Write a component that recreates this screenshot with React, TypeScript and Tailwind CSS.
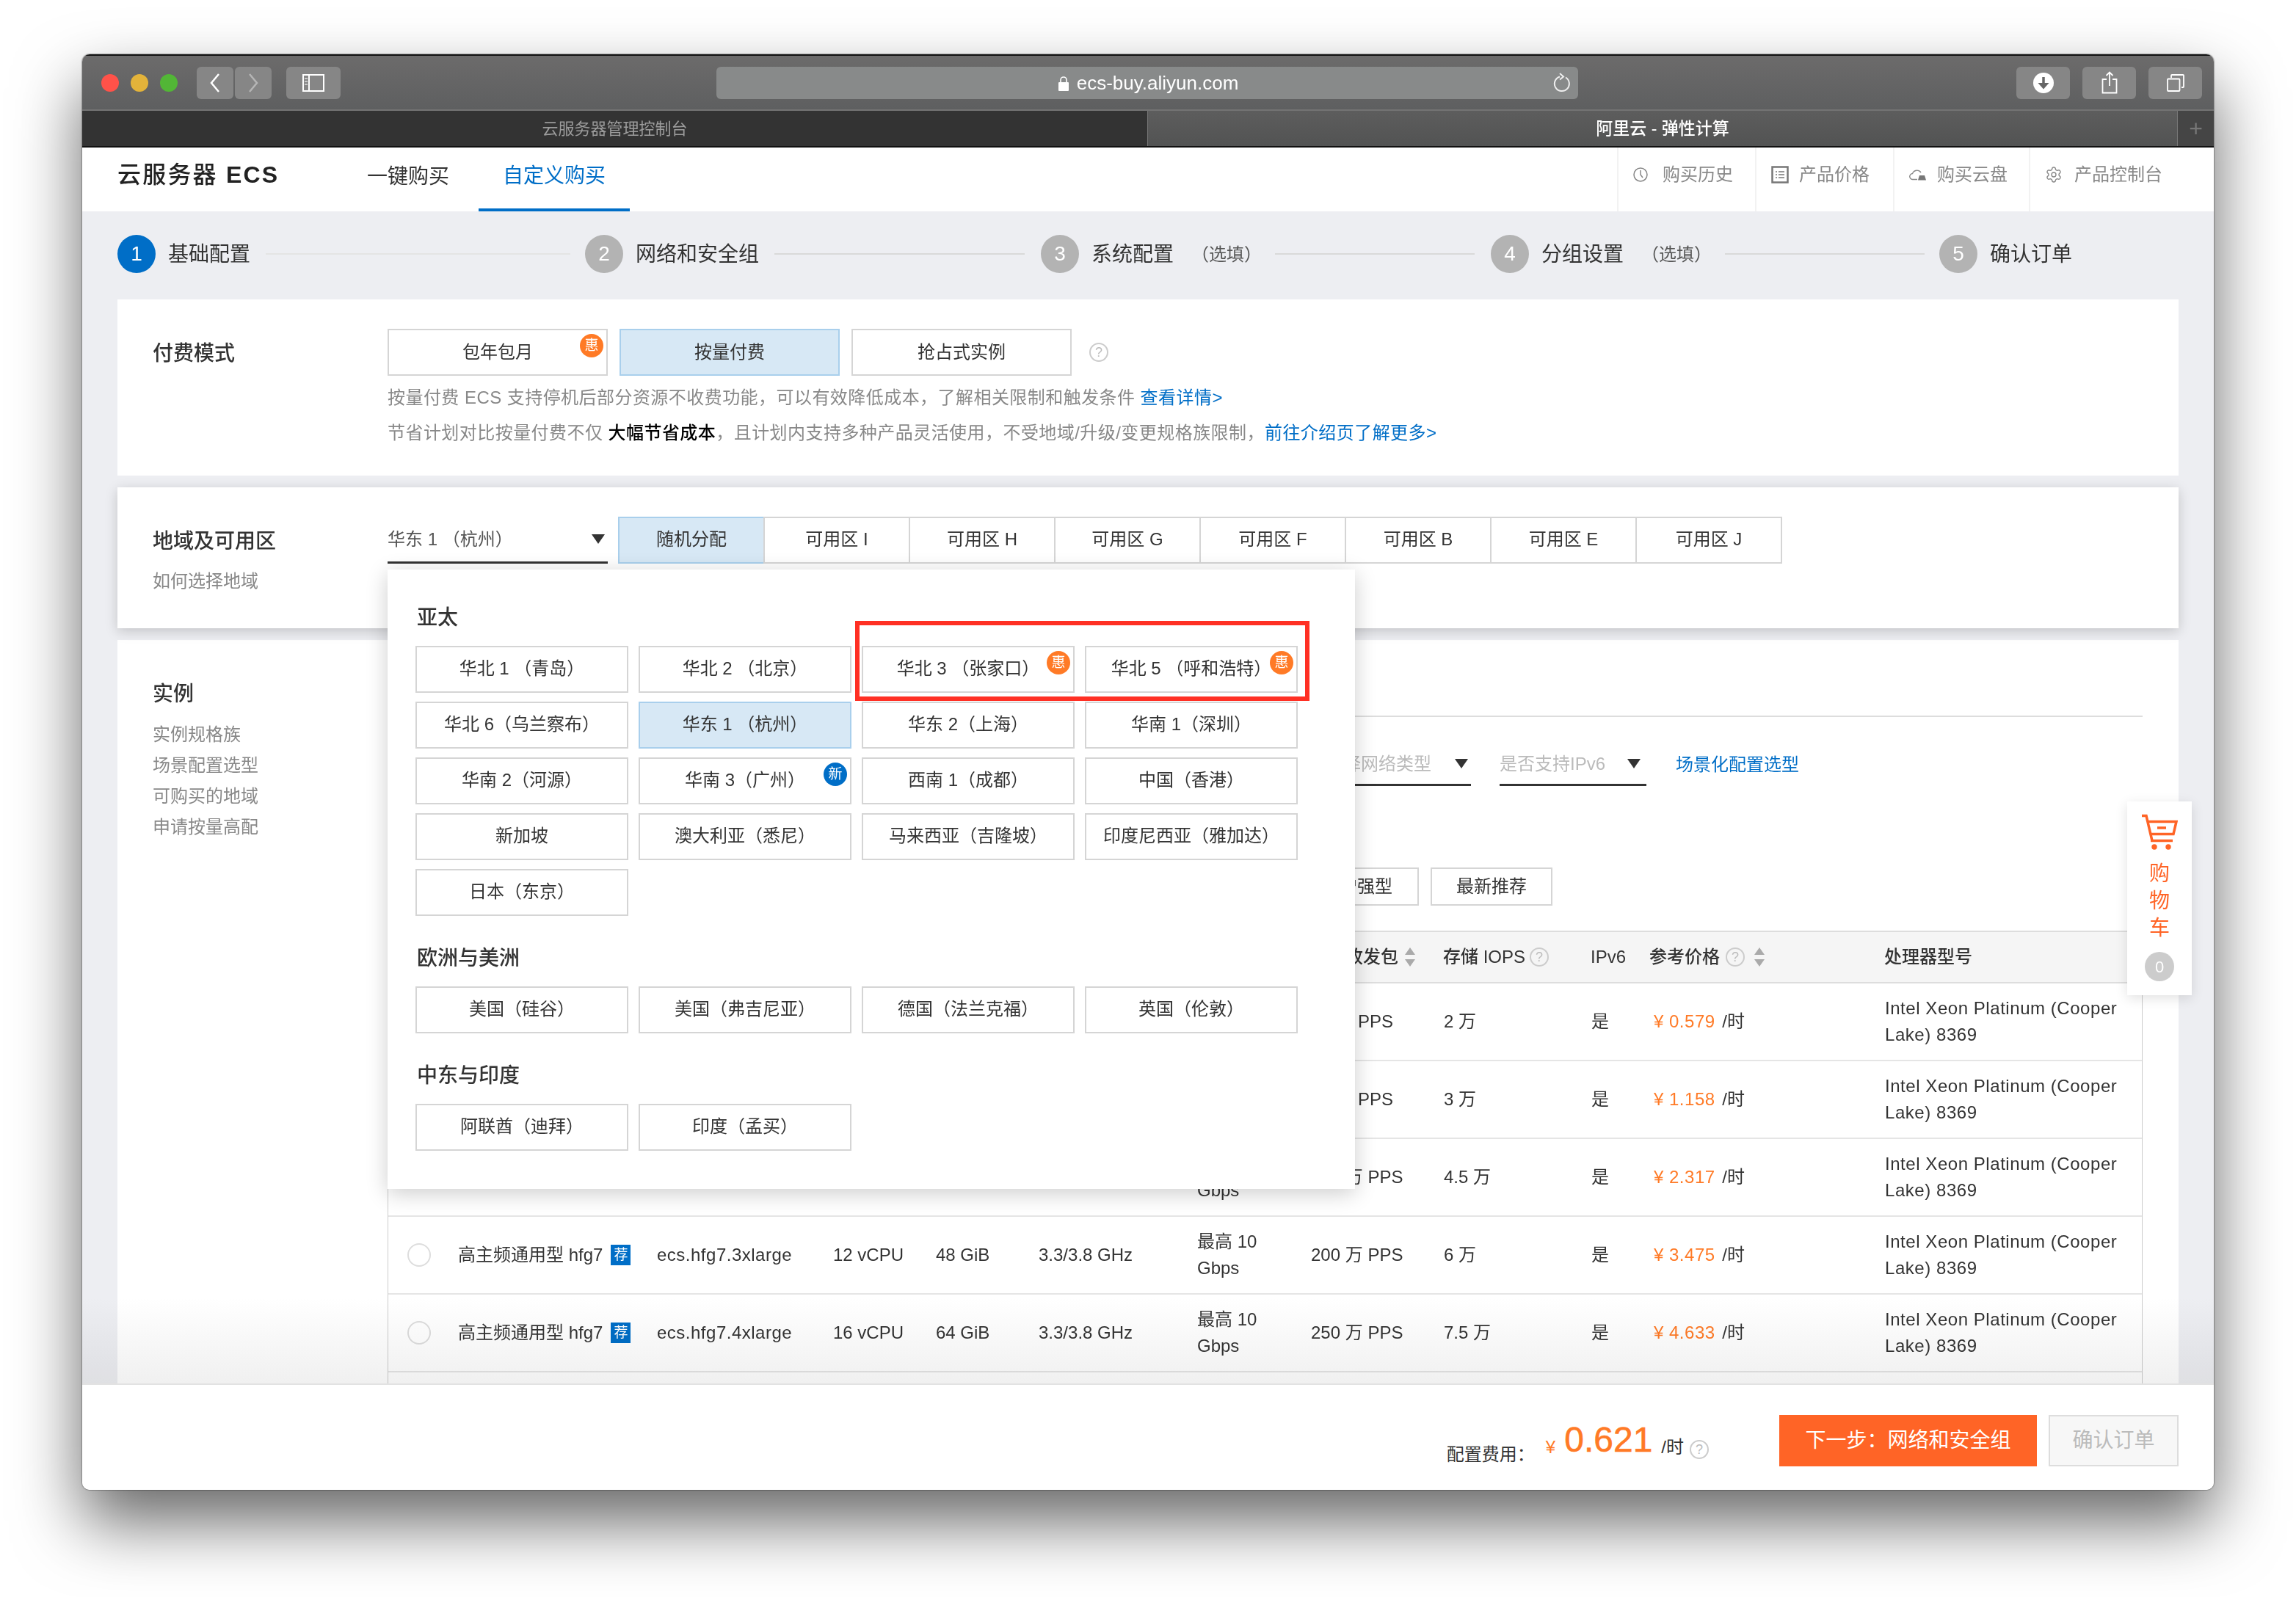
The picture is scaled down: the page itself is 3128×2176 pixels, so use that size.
import type { ReactNode } from 'react';
import { Settings } from 'lucide-react';

// the page uses full-width punctuation in its Chinese copy
const zh = (s: string) =>
  s.replace(/\(/g, '\uFF08').replace(/\)/g, '\uFF09').replace(/,/g, '\uFF0C').replace(/:/g, '\uFF1A');

const ROWS = [
  { spec: 'ecs.hfg7.large', cpu: '2 vCPU', mem: '8 GiB', pps: '30 万 PPS', iops: '2 万', price: '0.579' },
  { spec: 'ecs.hfg7.xlarge', cpu: '4 vCPU', mem: '16 GiB', pps: '50 万 PPS', iops: '3 万', price: '1.158' },
  { spec: 'ecs.hfg7.2xlarge', cpu: '8 vCPU', mem: '32 GiB', pps: '100 万 PPS', iops: '4.5 万', price: '2.317' },
  { spec: 'ecs.hfg7.3xlarge', cpu: '12 vCPU', mem: '48 GiB', pps: '200 万 PPS', iops: '6 万', price: '3.475' },
  { spec: 'ecs.hfg7.4xlarge', cpu: '16 vCPU', mem: '64 GiB', pps: '250 万 PPS', iops: '7.5 万', price: '4.633' },
];

const ZONES = ['可用区 I', '可用区 H', '可用区 G', '可用区 F', '可用区 B', '可用区 E', '可用区 J'];

const COLS =
  'grid grid-cols-[95px_271px_240px_140px_140px_216px_155px_181px_201px_80px_320px_351px] items-center';

type Region = { name: string; active?: boolean; badge?: '惠' | '新' };

const ASIA: Region[] = [
  { name: '华北 1 (青岛)' },
  { name: '华北 2 (北京)' },
  { name: '华北 3 (张家口)', badge: '惠' },
  { name: '华北 5 (呼和浩特)', badge: '惠' },
  { name: '华北 6(乌兰察布)' },
  { name: '华东 1 (杭州)', active: true },
  { name: '华东 2(上海)' },
  { name: '华南 1(深圳)' },
  { name: '华南 2(河源)' },
  { name: '华南 3(广州)', badge: '新' },
  { name: '西南 1(成都)' },
  { name: '中国(香港)' },
  { name: '新加坡' },
  { name: '澳大利亚(悉尼)' },
  { name: '马来西亚(吉隆坡)' },
  { name: '印度尼西亚(雅加达)' },
  { name: '日本(东京)' },
];

function Triangle({ className = '' }: { className?: string }) {
  return (
    <svg width="18" height="13" viewBox="0 0 18 13" className={className}>
      <polygon points="0,0 18,0 9,13" fill="#333" />
    </svg>
  );
}

function Help({ className = '' }: { className?: string }) {
  return (
    <span
      className={
        'inline-flex h-[26px] w-[26px] items-center justify-center rounded-full border-2 border-[#ccc] text-[18px] text-[#bbb] ' +
        className
      }
    >
      ?
    </span>
  );
}

function Sort() {
  return (
    <svg width="16" height="26" viewBox="0 0 16 26" className="ml-[8px]">
      <polygon points="8,0 15,10 1,10" fill="#aaa" />
      <polygon points="1,16 15,16 8,26" fill="#aaa" />
    </svg>
  );
}

function Badge({ label }: { label: '惠' | '新' }) {
  return (
    <span
      className={
        'absolute right-[4px] top-[5px] flex h-[32px] w-[32px] items-center justify-center rounded-full text-[19px] text-white ' +
        (label === '惠' ? 'bg-[#ff7a26]' : 'bg-[#006ec7]')
      }
    >
      {label}
    </span>
  );
}

function RegionButton({ region }: { region: Region }) {
  return (
    <div
      className={
        'relative flex h-[64px] w-[290px] items-center justify-center border-2 pb-[2px] text-[24px] text-[#333] ' +
        (region.active ? 'border-[#a9cfec] bg-[#d7e8f5]' : 'border-[#d5d5d5] bg-white')
      }
    >
      {zh(region.name)}
      {region.badge && <Badge label={region.badge} />}
    </div>
  );
}

function RegionGroup({ title, regions, className = '' }: { title: string; regions: Region[]; className?: string }) {
  return (
    <div className={className}>
      <div className="mb-[24px] ml-[2px] h-[32px] pt-[2px] text-[28px] font-medium leading-[32px] text-[#333]">{title}</div>
      <div className="grid grid-cols-[290px_290px_290px_290px] gap-x-[14px] gap-y-[12px]">
        {regions.map((r) => (
          <RegionButton key={r.name} region={r} />
        ))}
      </div>
    </div>
  );
}

function Step({ n, label, note, active }: { n: number; label: string; note?: boolean; active?: boolean }) {
  return (
    <div className="flex items-center">
      <span
        className={
          'flex h-[52px] w-[52px] items-center justify-center rounded-full text-[28px] text-white ' +
          (active ? 'bg-[#006ec7]' : 'bg-[#b3b3b3]')
        }
      >
        {n}
      </span>
      <span className="ml-[17px] pt-[2px] text-[28px] text-[#333]">{label}</span>
      {note && <span className="ml-[24px] pt-[2px] text-[24px] text-[#555]">{zh('(选填)')}</span>}
    </div>
  );
}

function TopLink({ icon, label, w }: { icon: ReactNode; label: string; w: string }) {
  return (
    <div className={'flex h-full items-center border-l-2 border-[#f2f2f2] pb-[13px] pl-[20px] text-[24px] text-[#888] ' + w}>
      {icon}
      <span>{label}</span>
    </div>
  );
}

function ToolButton({ children, w }: { children: ReactNode; w: string }) {
  return <div className={'flex h-[44px] items-center justify-center rounded-[6px] bg-[#868686] ' + w}>{children}</div>;
}

function Toolbar() {
  return (
    <div className="relative flex h-[77px] shrink-0 items-center border-t-2 border-t-[#111] border-b-2 border-b-[#737373] bg-gradient-to-b from-[#6c6b6b] to-[#5e5f60]">
      <div className="ml-[26px] flex gap-[16px]">
        <span className="h-[24px] w-[24px] rounded-full bg-[#ff5249]" />
        <span className="h-[24px] w-[24px] rounded-full bg-[#e3b33a]" />
        <span className="h-[24px] w-[24px] rounded-full bg-[#52b636]" />
      </div>
      <div className="ml-[26px] flex gap-[2px]">
        <ToolButton w="w-[50px]">
          <svg width="16" height="26" viewBox="0 0 16 26" fill="none" stroke="#fff" strokeWidth="2.5">
            <path d="M13 1 3 13l10 12" />
          </svg>
        </ToolButton>
        <ToolButton w="w-[50px]">
          <svg width="16" height="26" viewBox="0 0 16 26" fill="none" stroke="#b5b5b5" strokeWidth="2.5">
            <path d="M3 1l10 12L3 25" />
          </svg>
        </ToolButton>
      </div>
      <div className="ml-[20px]">
        <ToolButton w="w-[74px]">
          <svg width="30" height="24" viewBox="0 0 30 24" fill="none" stroke="#fff" strokeWidth="2">
            <rect x="1" y="1" width="28" height="22" />
            <path d="M9 1v22" />
            <path d="M3 6h4M3 10h4M3 14h4" strokeWidth="1.5" stroke="#ddd" />
          </svg>
        </ToolButton>
      </div>
      <div className="relative ml-[512px] flex h-[44px] w-[1174px] items-center justify-center rounded-[6px] bg-[#888a8a] pl-[2px] pt-[2px] text-[26px] text-white">
        <svg width="16" height="20" viewBox="0 0 16 20" className="mr-[10px]">
          <rect x="1" y="8" width="14" height="12" rx="1" fill="#fff" />
          <path d="M4 8V5a4 4 0 0 1 8 0v3" fill="none" stroke="#fff" strokeWidth="1.6" />
        </svg>
        ecs-buy.aliyun.com
        <svg width="24" height="28" viewBox="0 0 24 28" fill="none" stroke="#eee" strokeWidth="2" className="absolute right-[10px] top-[8px]">
          <path d="M17 6.5A10 10 0 1 1 9 5.5" />
          <path d="M9 1l5 4.5-5 4" />
        </svg>
      </div>
      <div className="ml-auto mr-[16px] flex gap-[17px]">
        <ToolButton w="w-[73px]">
          <svg width="28" height="28" viewBox="0 0 28 28">
            <circle cx="14" cy="14" r="14" fill="#fff" />
            <path d="M14 6v11" stroke="#666" strokeWidth="3.5" />
            <polygon points="6.5,14 21.5,14 14,22.5" fill="#666" />
          </svg>
        </ToolButton>
        <ToolButton w="w-[73px]">
          <svg width="22" height="31" viewBox="0 0 22 31" fill="none" stroke="#fff" strokeWidth="1.8">
            <path d="M7 11H1.5v18.5h19V11H15" />
            <path d="M11 20V1.5M6.5 6 11 1.5 15.5 6" />
          </svg>
        </ToolButton>
        <ToolButton w="w-[73px]">
          <svg width="24" height="24" viewBox="0 0 24 24" fill="none" stroke="#fff" strokeWidth="1.8">
            <rect x="1" y="6.5" width="16.5" height="16.5" rx="1" />
            <path d="M6 5V2a1 1 0 0 1 1-1h15a1 1 0 0 1 1 1v15a1 1 0 0 1-1 1h-2" />
          </svg>
        </ToolButton>
      </div>
    </div>
  );
}

function TabBar() {
  return (
    <div className="flex h-[50px] shrink-0 border-b-2 border-[#111] bg-[#333]">
      <div className="flex w-[1451px] items-center justify-center pt-[1px] text-[22px] text-[#9c9c9c]">云服务器管理控制台</div>
      <div className="flex w-[1404px] items-center justify-center border-x border-[#777] bg-gradient-to-b from-[#5d5d5d] to-[#525353] pt-[1px] text-[23px] font-medium text-white">
        阿里云 - 弹性计算
      </div>
      <div className="flex flex-1 items-center justify-center bg-[#454545] text-[32px] font-light text-[#777]">+</div>
    </div>
  );
}

function TopNav() {
  return (
    <div className="flex h-[87px] shrink-0 bg-white pl-[48px]">
      <div className="flex w-[306px] items-center pb-[13px] text-[32px] font-medium tracking-[2.2px] text-[#222]">
        云服务器&nbsp;<span className="font-bold">ECS</span>
      </div>
      <div className="flex items-center px-[34px] pb-[7px] text-[28px] text-[#333]">一键购买</div>
      <div className="ml-[6px] flex items-center border-b-4 border-[#006ec7] px-[33px] pb-[5px] text-[28px] text-[#006ec7]">自定义购买</div>
      <div className="ml-auto flex">
        <TopLink
          w="w-[188px]"
          label="购买历史"
          icon={
            <svg width="20" height="20" viewBox="0 0 20 20" fill="none" stroke="#888" strokeWidth="1.5" className="mr-[20px]">
              <circle cx="10" cy="10" r="9" />
              <path d="M10 4v6l3 4" />
            </svg>
          }
        />
        <TopLink
          w="w-[188px]"
          label="产品价格"
          icon={
            <svg width="24" height="24" viewBox="0 0 24 24" fill="none" stroke="#777" strokeWidth="2.5" className="mr-[14px]">
              <rect x="1.5" y="1.5" width="21" height="21" />
              <path d="M6 8h2M10 8h8M6 12h2M10 12h8M6 16h2M10 16h8" strokeWidth="1.6" />
            </svg>
          }
        />
        <TopLink
          w="w-[185px]"
          label="购买云盘"
          icon={
            <svg width="24" height="16" viewBox="0 0 24 16" fill="none" stroke="#888" strokeWidth="1.4" className="mr-[14px]">
              <path d="M11 14.5H5a4 4 0 0 1-.5-8A6.5 6.5 0 0 1 16 5" />
              <path d="M14 9h7l2 6.5H12z" fill="#777" stroke="none" />
            </svg>
          }
        />
        <TopLink
          w="w-[252px]"
          label="产品控制台"
          icon={<Settings size={24} strokeWidth={1.4} color="#888" className="mr-[16px]" />}
        />
      </div>
    </div>
  );
}

function Steps() {
  return (
    <div className="flex h-[120px] items-center pb-[4px]">
      <Step n={1} label="基础配置" active />
      <span className="ml-[21px] mr-[20px] h-[2px] w-[415px] bg-[#e4e4e4]" />
      <Step n={2} label="网络和安全组" />
      <span className="ml-[21px] mr-[22px] h-[2px] w-[341px] bg-[#d9d9d9]" />
      <Step n={3} label="系统配置" note />
      <span className="ml-[18px] mr-[22px] h-[2px] w-[272px] bg-[#d9d9d9]" />
      <Step n={4} label="分组设置" note />
      <span className="ml-[18px] mr-[20px] h-[2px] w-[272px] bg-[#d9d9d9]" />
      <Step n={5} label="确认订单" />
    </div>
  );
}

function BillingCard() {
  return (
    <div className="flex h-[240px] bg-white pt-[40px]">
      <div className="w-[368px] pl-[48px] pt-[14px] text-[28px] font-medium leading-[40px] text-[#333]">付费模式</div>
      <div>
        <div className="flex items-center gap-[16px]">
          <div className="relative flex h-[64px] w-[300px] items-center justify-center border-2 border-[#d5d5d5] text-[24px] text-[#333]">
            包年包月
            <Badge label="惠" />
          </div>
          <div className="flex h-[64px] w-[300px] items-center justify-center border-2 border-[#a9cfec] bg-[#d7e8f5] text-[24px] text-[#333]">
            按量付费
          </div>
          <div className="flex h-[64px] w-[300px] items-center justify-center border-2 border-[#d5d5d5] text-[24px] text-[#333]">
            抢占式实例
          </div>
          <Help className="ml-[8px]" />
        </div>
        <div className="mt-[6px] text-[24px] leading-[48px] tracking-[0.45px] text-[#888]">
          {zh('按量付费 ECS 支持停机后部分资源不收费功能,可以有效降低成本,了解相关限制和触发条件 ')}
          <span className="text-[#006ec7]">查看详情&gt;</span>
        </div>
        <div className="text-[24px] leading-[48px] tracking-[0.45px] text-[#888]">
          节省计划对比按量付费不仅 <span className="font-medium text-black">大幅节省成本</span>
          {zh(',且计划内支持多种产品灵活使用,不受地域/升级/变更规格族限制,')}
          <span className="text-[#006ec7]">前往介绍页了解更多&gt;</span>
        </div>
      </div>
    </div>
  );
}

function RegionCard() {
  return (
    <div className="relative z-10 mt-[16px] flex h-[192px] bg-white pt-[40px] shadow-[0_4px_16px_rgba(0,0,0,0.18)]">
      <div className="w-[368px] pl-[48px]">
        <div className="pt-[14px] text-[28px] font-medium leading-[40px] text-[#333]">地域及可用区</div>
        <div className="mt-[14px] text-[24px] leading-[40px] text-[#888]">如何选择地域</div>
      </div>
      <div className="flex h-[64px] w-[300px] items-center justify-between border-b-[3px] border-[#333] pr-[4px] text-[24px] text-[#555]">
        {zh('华东 1 (杭州)')}
        <Triangle />
      </div>
      <div className="ml-[14px] flex">
        <div className="flex h-[64px] w-[200px] items-center justify-center border-2 border-[#a9cfec] bg-[#d7e8f5] pb-[2px] text-[24px] text-[#333]">
          随机分配
        </div>
        {ZONES.map((z) => (
          <div key={z} className="-ml-[2px] flex h-[64px] w-[200px] items-center justify-center border-2 border-[#d5d5d5] pb-[2px] text-[24px] text-[#333]">
            {z}
          </div>
        ))}
      </div>
    </div>
  );
}

function InstanceTable() {
  return (
    <div className="border-x border-[#ccc] text-[24px] text-[#333]">
      <div className={COLS + ' -mx-px h-[72px] border-y-2 border-[#ddd] bg-[#f5f5f5] font-medium'}>
        <span />
        <span>实例规格</span>
        <span>规格族</span>
        <span>vCPU</span>
        <span>内存</span>
        <span>处理器主频</span>
        <span>内网带宽</span>
        <span className="flex items-center">
          内网收发包
          <Sort />
        </span>
        <span className="flex items-center">
          存储 IOPS
          <Help className="ml-[6px]" />
        </span>
        <span>IPv6</span>
        <span className="flex items-center">
          参考价格
          <Help className="ml-[8px]" />
          <span className="ml-[4px] flex">
            <Sort />
          </span>
        </span>
        <span>处理器型号</span>
      </div>
      {ROWS.map((r) => (
        <div key={r.spec} className={COLS + ' h-[106px] border-b-2 border-[#e5e5e5] leading-[36px]'}>
          <span className="ml-[26px] h-[32px] w-[32px] rounded-full border-2 border-[#ddd]" />
          <span className="flex items-center">
            高主频通用型 hfg7
            <span className="ml-[11px] flex h-[28px] w-[27px] items-center justify-center bg-[#006ec7] text-[19px] text-white">荐</span>
          </span>
          <span className="tracking-[0.5px]">{r.spec}</span>
          <span>{r.cpu}</span>
          <span>{r.mem}</span>
          <span>3.3/3.8 GHz</span>
          <span className="w-[100px]">最高 10 Gbps</span>
          <span>{r.pps}</span>
          <span>{r.iops}</span>
          <span>是</span>
          <span className="pl-[5px]">
            <span className="tracking-[0.5px] text-[#ff7a26]">¥ {r.price}</span> <span className="ml-[3px]">/时</span>
          </span>
          <span className="tracking-[0.55px]">Intel Xeon Platinum (Cooper Lake) 8369</span>
        </div>
      ))}
      <div className="h-[60px]" />
    </div>
  );
}

function InstanceCard() {
  return (
    <div className="mt-[16px] flex bg-white">
      <div className="w-[368px] pl-[48px] pt-[54px]">
        <div className="text-[28px] font-medium leading-[40px] text-[#333]">实例</div>
        <div className="mt-[14px] flex flex-col text-[24px] leading-[42px] text-[#888]">
          <span>实例规格族</span>
          <span>场景配置选型</span>
          <span>可购买的地域</span>
          <span>申请按量高配</span>
        </div>
      </div>
      <div className="w-[2391px]">
        <div className="h-[105px] border-b-2 border-[#ddd]" />
        <div className="flex h-[94px] items-end pl-[1272px]">
          <div className="flex h-[64px] w-[204px] items-center border-b-[3px] border-[#333] pl-[6px] pt-[6px] text-[24px] text-[#bbb]">
            选择网络类型
            <Triangle className="ml-[32px]" />
          </div>
          <div className="ml-[39px] flex h-[64px] w-[200px] items-center border-b-[3px] border-[#333] pt-[6px] text-[24px] text-[#bbb]">
            是否支持IPv6
            <Triangle className="ml-[30px]" />
          </div>
          <div className="ml-[40px] flex h-[64px] items-center pt-[6px] text-[24px] text-[#006ec7]">场景化配置选型</div>
        </div>
        <div className="mb-[34px] mt-[111px] flex pl-[1272px]">
          <div className="flex h-[52px] w-[133px] items-center justify-end border-2 border-[#d5d5d5] pr-[34px] text-[24px] text-[#333]">增强型</div>
          <div className="ml-[16px] flex h-[52px] w-[166px] items-center justify-center border-2 border-[#d5d5d5] text-[24px] text-[#333]">最新推荐</div>
        </div>
        <InstanceTable />
      </div>
    </div>
  );
}

function RegionMenu() {
  return (
    <div className="absolute left-[416px] top-[488px] z-20 h-[844px] w-[1318px] bg-white pl-[38px] pt-[48px] shadow-[0_6px_28px_rgba(0,0,0,0.2)]">
      <RegionGroup title="亚太" regions={ASIA} />
      <RegionGroup
        className="mt-[40px]"
        title="欧洲与美洲"
        regions={[{ name: '美国(硅谷)' }, { name: '美国(弗吉尼亚)' }, { name: '德国(法兰克福)' }, { name: '英国(伦敦)' }]}
      />
      <RegionGroup className="mt-[40px]" title="中东与印度" regions={[{ name: '阿联酋(迪拜)' }, { name: '印度(孟买)' }]} />
      <div className="absolute left-[637px] top-[70px] h-[109px] w-[619px] border-[6px] border-[#ff3024]" />
    </div>
  );
}

function CartTab() {
  return (
    <div className="absolute left-[2786px] top-[804px] z-10 flex h-[264px] w-[88px] flex-col items-center bg-white pt-[17px] shadow-[0_4px_16px_rgba(0,0,0,0.12)]">
      <svg width="50" height="50" viewBox="17 9 50 50" fill="none" stroke="#ff6426" strokeWidth="3.5">
        <path d="M18 11.5h6l8 34" />
        <path d="M26 19.5h39l-4 17H29" />
        <path d="M30 45.5h30" />
        <path d="M39 28h12" />
        <circle cx="35" cy="54" r="3.7" fill="#ff6426" stroke="none" />
        <circle cx="54" cy="54" r="3.7" fill="#ff6426" stroke="none" />
      </svg>
      <div className="mt-[13px] flex flex-col text-[28px] leading-[37px] text-[#ff6426]">
        <span>购</span>
        <span>物</span>
        <span>车</span>
      </div>
      <span className="mt-[14px] flex h-[40px] w-[40px] items-center justify-center rounded-full bg-[#ccc] text-[22px] text-white">0</span>
    </div>
  );
}

function BottomBar() {
  return (
    <div className="relative z-30 flex h-[145px] shrink-0 border-t-2 border-[#e2e2e2] bg-white pr-[48px] pt-[41px]">
      <div className="ml-auto flex h-[70px] items-end pb-[2px]">
        <span className="-mb-[4px] text-[24px] text-[#333]">{zh('配置费用:')}</span>
        <span className="mb-[6px] ml-[15px] text-[24px] text-[#ff7a26]">¥</span>
        <span className="mb-[4px] ml-[12px] text-[48px] leading-[60px] text-[#ff7a26] [-webkit-text-stroke:0.6px_#ff7a26]">0.621</span>
        <span className="mb-[6px] ml-[12px] text-[24px] text-[#333]">/时</span>
        <Help className="mb-[8px] ml-[8px]" />
      </div>
      <div className="ml-[96px] flex h-[70px] w-[351px] items-center justify-center bg-[#ff6426] text-[28px] text-white">{zh('下一步:网络和安全组')}</div>
      <div className="ml-[16px] flex h-[70px] w-[177px] items-center justify-center border-2 border-[#ddd] bg-[#f7f7f7] text-[28px] text-[#bbb]">确认订单</div>
    </div>
  );
}

export default function App() {
  return (
    <div className="h-[2176px] w-[3128px] overflow-hidden bg-white pl-[112px] pt-[74px] [font-family:'Liberation_Sans','Noto_Sans_CJK_SC',sans-serif]">
      <div className="flex h-[1956px] w-[2904px] flex-col overflow-hidden rounded-[10px] shadow-[0_44px_90px_rgba(0,0,0,0.6),0_0_2px_rgba(0,0,0,0.9)]">
        <Toolbar />
        <TabBar />
        <TopNav />
        <div className="relative flex-1 overflow-hidden bg-[#edeef2] px-[48px]">
          <Steps />
          <BillingCard />
          <RegionCard />
          <InstanceCard />
          <RegionMenu />
          <CartTab />
          <div className="pointer-events-none absolute bottom-0 left-0 right-0 z-20 h-[115px] bg-gradient-to-b from-white to-[#f0f0f0] mix-blend-multiply" />
        </div>
        <BottomBar />
      </div>
    </div>
  );
}
